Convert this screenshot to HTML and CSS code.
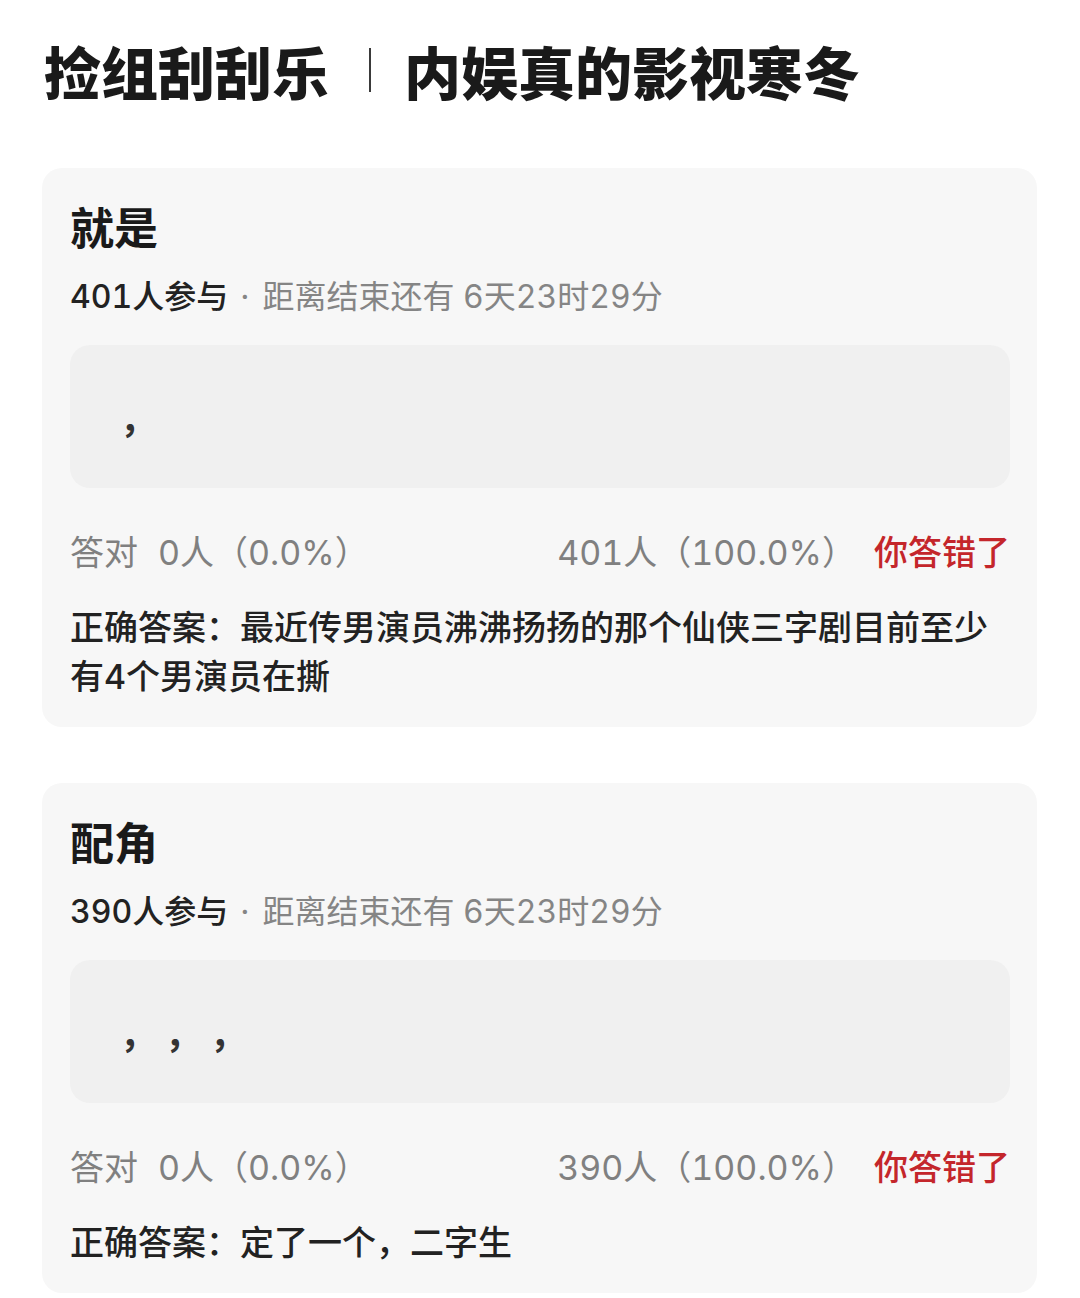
FILE: index.html
```html
<!DOCTYPE html>
<html lang="zh-CN">
<head>
    <meta charset="UTF-8">
    <meta name="viewport" content="width=device-width, initial-scale=1.0">
    <title>捡组刮刮乐</title>
    <link rel="stylesheet" href="styles.css">
</head>
<body>
    <h1 class="topic">捡组刮刮乐<span class="topic-sep"></span>内娱真的影视寒冬</h1>

    <div class="quiz-card">
        <h2 class="quiz-title">就是</h2>
        <div class="quiz-meta"><span class="count">401人参与</span><span class="dot">·</span>距离结束还有 6天23时29分</div>
        <div class="quiz-box"><span class="blank">，</span></div>
        <div class="quiz-stats">
            <div>答对<span class="num">0人（0.0%）</span></div>
            <div>401人（100.0%）<span class="wrong">你答错了</span></div>
        </div>
        <p class="quiz-solution">正确答案：最近传男演员沸沸扬扬的那个仙侠三字剧目前至少有4个男演员在撕</p>
    </div>

    <div class="quiz-card">
        <h2 class="quiz-title">配角</h2>
        <div class="quiz-meta"><span class="count">390人参与</span><span class="dot">·</span>距离结束还有 6天23时29分</div>
        <div class="quiz-box"><span class="blank">，</span><span class="blank">，</span><span class="blank">，</span></div>
        <div class="quiz-stats">
            <div>答对<span class="num">0人（0.0%）</span></div>
            <div>390人（100.0%）<span class="wrong">你答错了</span></div>
        </div>
        <p class="quiz-solution">正确答案：定了一个，二字生</p>
    </div>
</body>
</html>
```

FILE: styles.css
```css
body {
    font-family: "Inter", "Noto Sans CJK SC", sans-serif;
    font-feature-settings: "tnum";
    margin: 0;
    padding: 0;
    background-color: #ffffff;
    color: #222222;
}

.topic {
    margin: 30px 0 0 44px;
    font-family: "Noto Sans CJK SC", sans-serif;
    font-size: 57px;
    line-height: 80px;
    font-weight: 900;
    color: #1a1a1a;
    display: flex;
    align-items: center;
}

.topic-sep {
    display: inline-block;
    width: 2px;
    height: 44px;
    background-color: #3a3a3a;
    margin: 0 33px 0 40px;
}

.quiz-card {
    margin: 58px 43px 0 42px;
    padding: 31px 27px 26px 28px;
    background-color: #f7f7f7;
    border-radius: 20px;
}

.quiz-card + .quiz-card {
    margin-top: 56px;
}

.quiz-title {
    margin: 0;
    font-size: 44px;
    line-height: 60px;
    font-weight: 700;
    color: #1a1a1a;
}

.quiz-meta {
    margin-top: 18px;
    font-size: 32px;
    line-height: 40px;
    color: #858585;
}

.quiz-meta .count {
    color: #222222;
    font-weight: 500;
}

.quiz-meta .dot {
    margin: 0 13px 0 12px;
}

.quiz-box {
    margin-top: 28px;
    height: 143px;
    border-radius: 20px;
    background-color: #f0f0f0;
    display: flex;
    align-items: center;
    padding-left: 50px;
    font-family: "Noto Sans CJK SC", sans-serif;
    font-size: 36px;
    font-weight: 700;
    color: #333333;
}

.quiz-box .blank {
    display: inline-block;
    width: 45px;
}

.quiz-stats {
    margin-top: 43px;
    display: flex;
    justify-content: space-between;
    font-size: 34px;
    line-height: 44px;
    color: #808080;
}

.quiz-stats .num {
    margin-left: 20px;
}

.quiz-stats .wrong {
    margin-left: 18px;
    color: #c4262b;
    font-weight: 500;
}

.quiz-solution {
    margin: 28px 0 0;
    font-size: 34px;
    line-height: 49px;
    font-weight: 500;
    color: #222222;
}
```
